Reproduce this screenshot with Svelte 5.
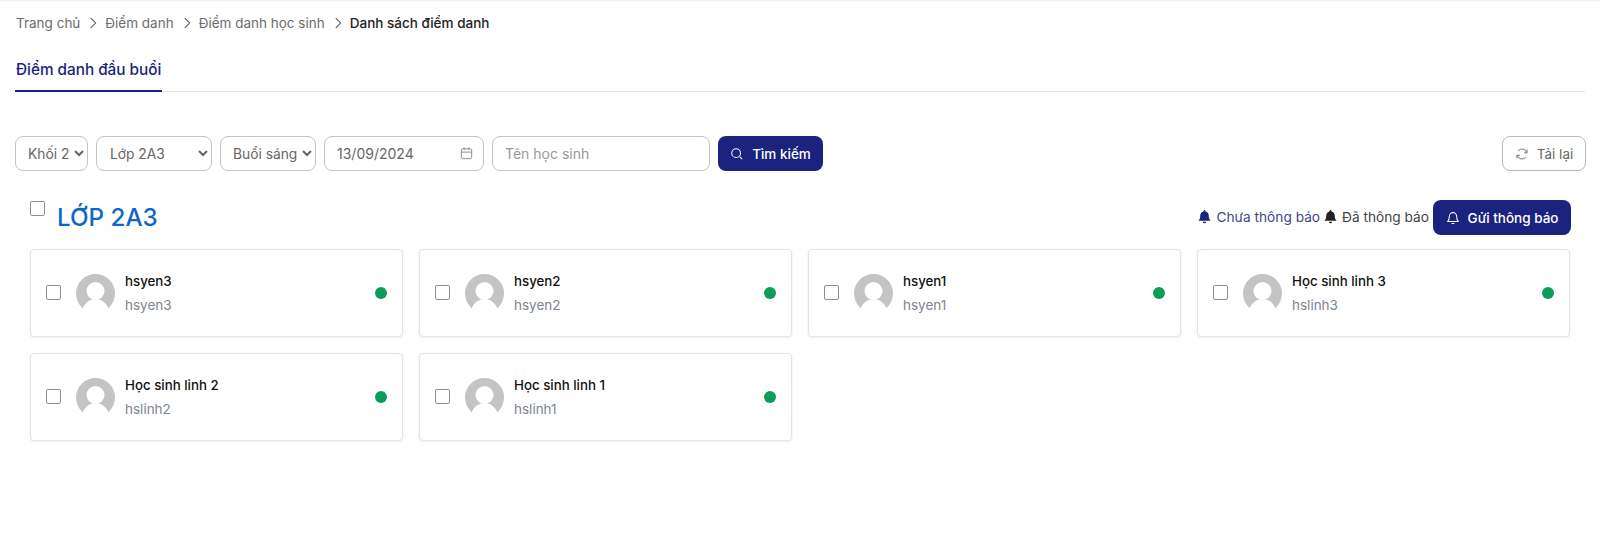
<script>
	// ---- data ----
	const crumbs = ['Trang chủ', 'Điểm danh', 'Điểm danh học sinh'];
	const students = [
		{ name: 'hsyen3', user: 'hsyen3' },
		{ name: 'hsyen2', user: 'hsyen2' },
		{ name: 'hsyen1', user: 'hsyen1' },
		{ name: 'Học sinh linh 3', user: 'hslinh3' },
		{ name: 'Học sinh linh 2', user: 'hslinh2' },
		{ name: 'Học sinh linh 1', user: 'hslinh1' }
	];
</script>

<div class="page">
	<nav class="crumbs">
		{#each crumbs as crumb}
			<span>{crumb}</span>
			<svg class="sep" viewBox="0 0 16 16" width="14" height="14"><path d="M5.5 2.5 11 8l-5.5 5.5" /></svg>
		{/each}
		<span class="current">Danh sách điểm danh</span>
	</nav>

	<div class="tabs">
		<button type="button" class="tab">Điểm danh đầu buổi</button>
	</div>

	<div class="filters">
		<select class="field khoi"><option>Khối 2</option></select>
		<select class="field lop"><option>Lớp 2A3</option></select>
		<select class="field buoi"><option>Buổi sáng</option></select>
		<div class="field date">
			<span>13/09/2024</span>
			<svg viewBox="0 0 16 16" width="15" height="15"><rect x="2.5" y="3" width="11" height="10.5" rx="1.5" /><path d="M2.5 6.5h11M5.5 1.5v3M10.5 1.5v3" /></svg>
		</div>
		<input class="field search" type="text" placeholder="Tên học sinh" />
		<button type="button" class="primary">
			<svg viewBox="0 0 16 16" width="14" height="14"><circle cx="7" cy="7" r="5" /><path d="m11 11 3 3" /></svg>
			Tìm kiếm
		</button>
		<button type="button" class="reload">
			<svg viewBox="0 0 16 16" width="14" height="14"><path d="M13.5 6.5A5.7 5.7 0 0 0 3.6 4.4M2.5 9.5a5.7 5.7 0 0 0 9.9 2.1" /><path d="M13.8 3v3.6h-3.4M2.2 13V9.4h3.4" /></svg>
			Tải lại
		</button>
	</div>

	<div class="class-head">
		<input class="check" type="checkbox" />
		<h2>LỚP 2A3</h2>
		<div class="legend">
			<span class="pending">
				<svg viewBox="0 0 16 16" width="15" height="15"><path d="M8 1a1 1 0 0 1 1 1v.6A4.5 4.5 0 0 1 12.5 7c0 3.5 1 4.6 2 5.5H1.5c1-.9 2-2 2-5.5A4.5 4.5 0 0 1 7 2.6V2a1 1 0 0 1 1-1Z" /><path d="M6.2 13.5h3.6a1.8 1.8 0 0 1-3.6 0Z" /></svg>
				Chưa thông báo
			</span>
			<span class="sent">
				<svg viewBox="0 0 16 16" width="15" height="15"><path d="M8 1a1 1 0 0 1 1 1v.6A4.5 4.5 0 0 1 12.5 7c0 3.5 1 4.6 2 5.5H1.5c1-.9 2-2 2-5.5A4.5 4.5 0 0 1 7 2.6V2a1 1 0 0 1 1-1Z" /><path d="M6.2 13.5h3.6a1.8 1.8 0 0 1-3.6 0Z" /></svg>
				Đã thông báo
			</span>
			<button type="button" class="primary notify">
				<svg viewBox="0 0 16 16" width="14" height="14"><path d="M8 1.8a4.3 4.3 0 0 0-4.2 4.4c0 3.6-1 4.9-1.8 5.8h12c-.8-.9-1.8-2.2-1.8-5.8A4.3 4.3 0 0 0 8 1.8ZM6.3 14.2h3.4" /></svg>
				Gửi thông báo
			</button>
		</div>
	</div>

	<div class="grid">
		{#each students as s}
			<div class="card">
				<input class="check" type="checkbox" />
				<svg class="avatar" viewBox="0 0 39 39" width="39" height="39">
					<circle cx="19.5" cy="19.5" r="19.5" fill="#c4c4c4" />
					<circle cx="19.5" cy="17" r="9" fill="#fff" />
					<path d="M6 36c2.5-7 7-11 13.5-11S30.5 29 33 36l2 4H4Z" fill="#fff" />
				</svg>
				<div class="info">
					<div class="name">{s.name}</div>
					<div class="user">{s.user}</div>
				</div>
				<span class="dot"></span>
			</div>
		{/each}
	</div>
</div>

<style>
	:global(body) {
		margin: 0;
		background: #fff;
		font-family: Inter, 'Noto Sans', sans-serif;
		font-size: 14px;
		color: #212529;
	}
	.page {
		height: 546px;
		box-sizing: border-box;
		padding: 15px 15px 0 15px;
		box-shadow: inset 0 2px 2px -1px #eeeeee;
		overflow: hidden;
	}
	.crumbs {
		display: flex;
		align-items: center;
		gap: 5px;
		height: 16px;
		font-size: 13.5px;
		color: #6c6c6c;
		padding-left: 1px;
	}
	.sep {
		fill: none;
		stroke: #555;
		stroke-width: 1.2;
		margin: 0 0 0 1px;
	}
	.current {
		color: #222;
		font-weight: 500;
	}
	.tabs {
		margin-top: 19px;
		height: 41px;
		border-bottom: 1px solid #e3e4e6;
		display: flex;
	}
	.tab {
		padding: 0 0 2px 1px;
		width: 147px;
		height: 42px;
		border: 0;
		border-bottom: 2px solid #1a237e;
		background: none;
		font: 500 15.3px Inter, sans-serif;
		color: #1a237e;
		white-space: nowrap;
		text-align: left;
	}
	.filters {
		display: flex;
		align-items: center;
		gap: 8px;
		margin-top: 44px;
		margin-right: -1px;
	}
	.field {
		box-sizing: border-box;
		height: 35px;
		border: 1px solid #c4c4c4;
		border-radius: 8px;
		background: #fff;
		font: 400 14px Inter, sans-serif;
		color: #666;
	}
	select.field {
		padding: 0 0 0 8px;
		outline: none;
		font-size: 13.8px;
	}
	.khoi { width: 73px; }
	.lop { width: 116px; }
	select.lop { padding-left: 9px; }
	.buoi { width: 96px; }
	.date {
		width: 160px;
		display: flex;
		align-items: center;
		justify-content: space-between;
		padding: 0 9px 0 12px;
	}
	.date svg {
		fill: none;
		stroke: #888;
	}
	.search {
		width: 218px;
		padding: 0 12px;
		outline: none;
	}
	.search::placeholder {
		color: #999;
	}
	.primary {
		display: inline-flex;
		align-items: center;
		justify-content: center;
		gap: 8px;
		height: 35px;
		width: 105px;
		border: 0;
		border-radius: 8px;
		background: #1a237e;
		color: #fff;
		font: 500 13.5px Inter, sans-serif;
		padding: 0;
	}
	.primary svg {
		fill: none;
		stroke: #fff;
		stroke-width: 1.2;
	}
	.reload {
		margin-left: auto;
		display: inline-flex;
		align-items: center;
		justify-content: center;
		gap: 8px;
		width: 84px;
		height: 35px;
		border: 1px solid #bbb;
		border-radius: 8px;
		background: #fff;
		color: #666;
		font: 400 13.5px Inter, sans-serif;
		padding: 0;
	}
	.reload svg {
		fill: none;
		stroke: #666;
	}
	.class-head {
		display: flex;
		margin: 30px 14px 0 15px;
		height: 48px;
	}
	.check {
		appearance: none;
		box-sizing: border-box;
		width: 15px;
		height: 15px;
		margin: 0;
		flex: none;
		border: 1px solid #8f8f8f;
		border-radius: 2px;
		background: #fff;
	}
	h2 {
		margin: 2px 0 0 12px;
		font: 500 24.2px/29px Inter, sans-serif;
		color: #0d68c4;
	}
	.legend {
		margin-left: auto;
		margin-top: -1px;
		display: flex;
		align-items: flex-start;
		gap: 4px;
		font-size: 13.7px;
		height: 35px;
	}
	.legend > span {
		display: inline-flex;
		align-items: center;
		gap: 4px;
		height: 33px;
	}
	.pending {
		color: #3f4590;
		margin-right: -1px;
	}
	.pending svg { fill: #1a237e; }
	.sent { color: #444; }
	.sent svg { fill: #222; }
	.notify {
		width: 138px;
	}
	.grid {
		display: grid;
		grid-template-columns: repeat(4, 373px);
		gap: 16px;
		margin: 0 0 0 15px;
	}
	.card {
		box-sizing: border-box;
		height: 88px;
		display: flex;
		align-items: center;
		padding: 0 15px;
		border: 1px solid #e4e4e4;
		border-radius: 4px;
		background: #fff;
		box-shadow: 0 1px 3px rgba(0, 0, 0, 0.08);
	}
	.card .check {
		margin-top: -2px;
	}
	.avatar {
		margin-left: 15px;
		flex: none;
	}
	.info {
		margin-left: 10px;
		flex: 1;
	}
	.name {
		font-size: 13.3px;
		font-weight: 500;
		color: #111;
		line-height: 16px;
	}
	.user {
		margin-top: 8px;
		font-size: 13.5px;
		color: #7d8490;
		line-height: 16px;
	}
	.dot {
		width: 12px;
		height: 12px;
		border-radius: 50%;
		background: #0c9d58;
		flex: none;
	}
</style>
